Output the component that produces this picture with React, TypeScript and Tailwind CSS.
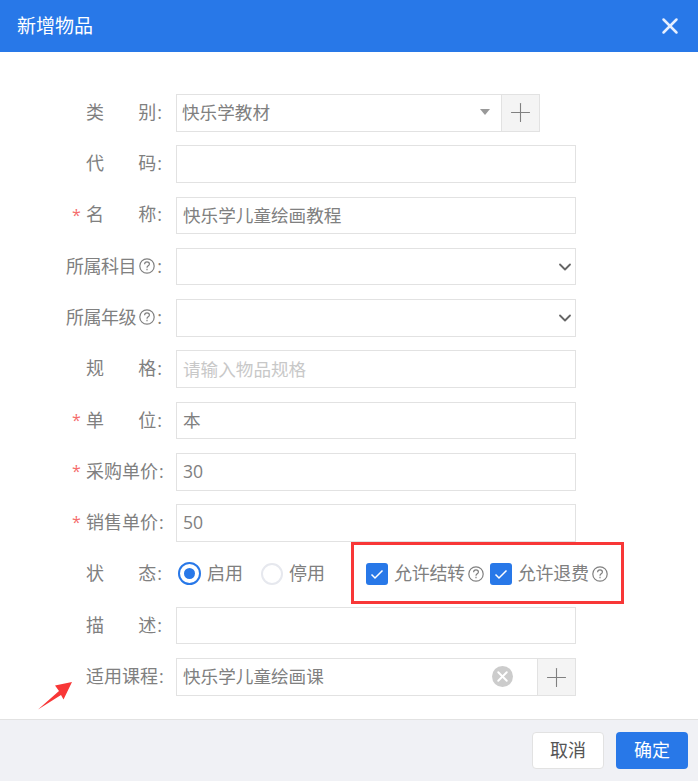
import React from "react";
import { ChevronDown, Plus, X } from "lucide-react";

const Help = () => (
  <svg width="16" height="16" viewBox="0 0 16 16" fill="none" stroke="#808080" strokeWidth="1.2" className="shrink-0">
    <circle cx="8" cy="8" r="7.2" />
    <path d="M5.6 6.2c0-1.4 1-2.300 2.400-2.300s2.400.9 2.400 2.100c0 1.900-2.400 1.800-2.400 3.700" />
    <path d="M8 10.800v1.400" />
  </svg>
);

const Label = ({ text, required, help }: { text: string[]; required?: boolean; help?: boolean }) => (
  <div className="relative mr-[13px] flex w-[163px] shrink-0 items-center justify-end whitespace-nowrap pb-[1px] text-[18px] text-[#808080]">
    {required && <span className="absolute left-[72px] top-[8px] text-[16px] leading-[20px] text-[#f56c6c]">*</span>}
    <div className={"flex items-center " + (help ? "w-[97px]" : "w-[77px]")}>
      {help ? (
        <span className="flex items-center gap-[3px]">
          <span className="tracking-[-0.5px]">{text[0]}</span>
          <Help />
        </span>
      ) : (
        <span className="flex flex-1 justify-between">
          {text.map((t) => (
            <span key={t}>{t}</span>
          ))}
        </span>
      )}
      <span className="ml-auto pl-[1px] pr-[1px]">:</span>
    </div>
  </div>
);

const Input = ({ value, placeholder }: { value?: string; placeholder?: string }) => (
  <div className="flex h-full w-[400px] items-center border border-[#e2e2e2] bg-white px-[6px] pb-[1px] text-[17.6px] text-[#808080]">
    {value}
    {placeholder && <span className="text-[#c8c8c8]">{placeholder}</span>}
  </div>
);

const Row = ({ children }: { children: React.ReactNode }) => (
  <div className="flex h-[37.5px] items-stretch">{children}</div>
);

const AddButton = () => (
  <div className="flex w-[38px] shrink-0 items-center justify-center border border-l-0 border-[#e2e2e2] bg-[#f4f4f4]">
    <Plus size={31} strokeWidth={0.85} color="#808080" />
  </div>
);

const SelectBox = () => (
  <div className="flex h-full w-[400px] items-center justify-end border border-[#e2e2e2] bg-white">
    <ChevronDown size={20} strokeWidth={2.2} color="#666666" />
  </div>
);

const Check = ({ label }: { label: string }) => (
  <div className="flex items-center">
    <span className="flex h-[22px] w-[22px] items-center justify-center rounded-[3px] bg-[#2878e8]">
      <svg width="14" height="14" viewBox="0 0 14 14" fill="none" stroke="#ffffff" strokeWidth="1.5">
        <path d="M1.500 7.500l3.500 3.500 7.500-7.500" />
      </svg>
    </span>
    <span className="ml-[6px] mr-[3px] text-[18px] tracking-[-0.3px] text-[#808080]">{label}</span>
    <Help />
  </div>
);

export default function App() {
  return (
    <div
      className="relative flex h-[781px] w-[698px] flex-col overflow-hidden bg-white"
      style={{ fontFamily: '"Open Sans", "Noto Sans CJK SC", sans-serif' }}
    >
      <div className="flex h-[52px] shrink-0 items-center justify-between bg-[#2878e8] pl-[17px] pr-[15px] text-[19px] text-white">
        <span>新增物品</span>
        <X size={26} strokeWidth={2.3} color="#e6efff" />
      </div>

      <div className="flex flex-1 flex-col gap-[13.8px] pt-[42px]">
        <Row>
          <Label text={["类", "别"]} />
          <div className="flex w-[326px] items-center justify-between border border-[#e2e2e2] pb-[1px] pl-[5px] pr-[11px] text-[17.6px] text-[#808080]">
            快乐学教材
            <span className="h-0 w-0 border-x-[5px] border-t-[6px] border-x-transparent border-t-[#999999]" />
          </div>
          <AddButton />
        </Row>
        <Row>
          <Label text={["代", "码"]} />
          <Input />
        </Row>
        <Row>
          <Label text={["名", "称"]} required />
          <Input value="快乐学儿童绘画教程" />
        </Row>
        <Row>
          <Label text={["所属科目"]} help />
          <SelectBox />
        </Row>
        <Row>
          <Label text={["所属年级"]} help />
          <SelectBox />
        </Row>
        <Row>
          <Label text={["规", "格"]} />
          <Input placeholder="请输入物品规格" />
        </Row>
        <Row>
          <Label text={["单", "位"]} required />
          <Input value="本" />
        </Row>
        <Row>
          <Label text={["采购单价"]} required />
          <Input value="30" />
        </Row>
        <Row>
          <Label text={["销售单价"]} required />
          <Input value="50" />
        </Row>
        <Row>
          <Label text={["状", "态"]} />
          <div className="flex items-center pb-[1px] text-[18px] text-[#808080]">
            <span className="ml-[2px] flex h-[23px] w-[23px] items-center justify-center rounded-full border-2 border-[#2878e8]">
              <span className="h-[11px] w-[11px] rounded-full bg-[#2878e8]" />
            </span>
            <span className="ml-[6px]">启用</span>
            <span className="ml-[18px] h-[22px] w-[22px] rounded-full border-2 border-[#e6e8ee]" />
            <span className="ml-[6px]">停用</span>
            <div className="ml-[41px] flex items-center gap-[6px]">
              <Check label="允许结转" />
              <Check label="允许退费" />
            </div>
          </div>
        </Row>
        <Row>
          <Label text={["描", "述"]} />
          <Input />
        </Row>
        <Row>
          <Label text={["适用课程"]} />
          <div className="flex w-[362px] items-center justify-between border border-[#e2e2e2] pb-[1px] pl-[6px] pr-[24px] text-[17.6px] text-[#808080]">
            快乐学儿童绘画课
            <span className="flex h-[21px] w-[21px] items-center justify-center rounded-full bg-[#cccccc]">
              <X size={17} strokeWidth={2.8} color="#ffffff" />
            </span>
          </div>
          <AddButton />
        </Row>
      </div>

      <div className="flex h-[62px] shrink-0 items-center justify-end gap-[12px] border-t border-[#e2e2e2] bg-[#f0f1f5] pr-[10px] text-[18px]">
        <button className="h-[37px] w-[72px] rounded-[4px] border border-[#e2e2e2] bg-white text-[#555555]">取消</button>
        <button className="h-[37px] w-[72px] rounded-[4px] bg-[#2878e8] text-white">确定</button>
      </div>

      <div className="absolute left-[351px] top-[542px] h-[62px] w-[273px] border-[3px] border-[#f83737]" />
      <svg className="absolute left-[36px] top-[680px]" width="38" height="30" viewBox="0 0 38 30">
        <path d="M2 29.500L23 11 19 5.500 36 2 27.500 19.500 25 15z" fill="#f83737" />
      </svg>
    </div>
  );
}
